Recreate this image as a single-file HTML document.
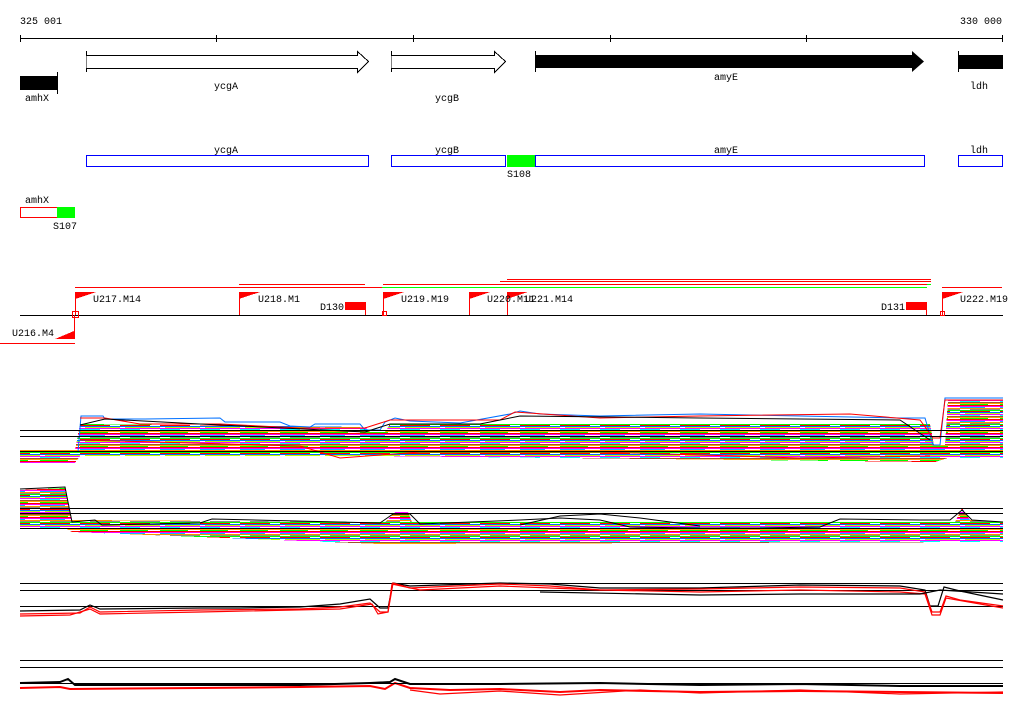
<!DOCTYPE html>
<html><head><meta charset="utf-8"><style>
html,body{margin:0;padding:0;background:#fff;width:1024px;height:714px;overflow:hidden}
svg{display:block}
text{font-family:"Liberation Mono",monospace;font-size:10px;fill:#000}
</style></head><body>
<svg width="1024" height="714" viewBox="0 0 1024 714" xmlns="http://www.w3.org/2000/svg" shape-rendering="crispEdges">
<defs>
<pattern id="st" width="40" height="14" patternUnits="userSpaceOnUse">
<rect width="40" height="14" fill="#fff"/>
<rect y="0" width="40" height="1" fill="#ff00ff"/>
<rect y="1" width="25" height="1" fill="#00c0ff"/>
<rect y="2" width="40" height="1" fill="#ff8c00"/>
<rect x="10" y="3" width="30" height="1" fill="#888"/>
<rect y="4" width="40" height="1" fill="#00ff00"/>
<rect y="5" width="30" height="1" fill="#ff0000"/>
<rect y="6" width="40" height="1" fill="#0070ff"/>
<rect x="5" y="7" width="35" height="1" fill="#c0ff00"/>
<rect y="8" width="40" height="1" fill="#ff00ff"/>
<rect y="9" width="20" height="1" fill="#00ffff"/>
<rect y="10" width="40" height="1" fill="#a0522d"/>
<rect y="11" width="40" height="1" fill="#ffa500"/>
<rect y="12" width="28" height="1" fill="#00ff00"/>
<rect y="13" width="40" height="1" fill="#ff0000"/>
</pattern>
</defs>
<!-- axis -->
<text x="20" y="24">325 001</text>
<text x="960" y="24">330 000</text>
<g stroke="#000" stroke-width="1" fill="none">
<line x1="20" y1="38.5" x2="1003" y2="38.5"/>
<line x1="20.5" y1="35" x2="20.5" y2="42"/><line x1="216.5" y1="35" x2="216.5" y2="42"/>
<line x1="413.5" y1="35" x2="413.5" y2="42"/><line x1="610.5" y1="35" x2="610.5" y2="42"/>
<line x1="806.5" y1="35" x2="806.5" y2="42"/><line x1="1002.5" y1="35" x2="1002.5" y2="42"/>
<!-- ycgA -->
<line x1="86.5" y1="51" x2="86.5" y2="72"/>
<path d="M86.5 55.5 H357.5 V51.5 L368.5 61.5 L357.5 72.5 V68.5 H86.5" fill="#fff"/>
<line x1="391.5" y1="51" x2="391.5" y2="72"/>
<path d="M391.5 55.5 H494.5 V51.5 L505.5 61.5 L494.5 72.5 V68.5 H391.5" fill="#fff"/>
<line x1="535.5" y1="51" x2="535.5" y2="72"/>
<line x1="958.5" y1="51" x2="958.5" y2="72"/>
<line x1="57.5" y1="72" x2="57.5" y2="94"/>
</g>
<path d="M535 55 H912 V51 L924 61.5 L912 72 V68 H535Z" fill="#000" shape-rendering="auto"/>
<rect x="958" y="55" width="45" height="14" fill="#000"/>
<rect x="20" y="76" width="37" height="14" fill="#000"/>
<text x="214" y="89">ycgA</text>
<text x="435" y="101">ycgB</text>
<text x="714" y="80">amyE</text>
<text x="970" y="89">ldh</text>
<text x="25" y="101">amhX</text>
<!-- blue boxes -->
<g fill="#fff" stroke="#0000ff">
<rect x="86.5" y="155.5" width="282" height="11"/>
<rect x="391.5" y="155.5" width="114" height="11"/>
<rect x="535.5" y="155.5" width="389" height="11"/>
<rect x="958.5" y="155.5" width="44" height="11"/>
</g>
<rect x="507" y="155" width="28" height="12" fill="#00ff00"/>
<text x="214" y="153">ycgA</text><text x="435" y="153">ycgB</text>
<text x="714" y="153">amyE</text><text x="970" y="153">ldh</text>
<text x="507" y="177">S108</text>
<rect x="20.5" y="207.5" width="37" height="10" fill="#fff" stroke="#ff0000"/>
<rect x="57" y="207" width="18" height="11" fill="#00ff00"/>
<text x="25" y="203">amhX</text><text x="53" y="229">S107</text>
<!-- track lines -->
<g stroke-width="1" fill="none">
<line x1="75" y1="287.5" x2="382" y2="287.5" stroke="#f00"/>
<line x1="382" y1="287.5" x2="927" y2="287.5" stroke="#0f0"/>
<line x1="239" y1="284.5" x2="365" y2="284.5" stroke="#f00"/>
<line x1="383" y1="284.5" x2="927" y2="284.5" stroke="#f00"/>
<line x1="927" y1="284.5" x2="931" y2="284.5" stroke="#0f0"/>
<line x1="500" y1="281.5" x2="931" y2="281.5" stroke="#f00"/>
<line x1="507" y1="279.5" x2="931" y2="279.5" stroke="#f00"/>
<line x1="942" y1="287.5" x2="1002" y2="287.5" stroke="#f00"/>
<line x1="20" y1="315.5" x2="1003" y2="315.5" stroke="#000"/>
<line x1="0" y1="343.5" x2="75" y2="343.5" stroke="#f00"/>
<g stroke="#f00">
<line x1="75.5" y1="292" x2="75.5" y2="315"/>
<line x1="74.5" y1="315" x2="74.5" y2="339"/>
<line x1="239.5" y1="292" x2="239.5" y2="315"/>
<line x1="383.5" y1="292" x2="383.5" y2="315"/>
<line x1="469.5" y1="292" x2="469.5" y2="315"/>
<line x1="507.5" y1="292" x2="507.5" y2="315"/>
<line x1="942.5" y1="292" x2="942.5" y2="315"/>
<line x1="365.5" y1="302" x2="365.5" y2="315"/>
<line x1="926.5" y1="302" x2="926.5" y2="315"/>
<rect x="72.5" y="311.5" width="6" height="6"/>
<rect x="382.5" y="311.5" width="4" height="4"/>
<rect x="940.5" y="311.5" width="4" height="4"/>
</g>
</g>
<g fill="#f00">
<path d="M75 292H96L75 299Z"/><path d="M239 292H260L239 299Z"/>
<path d="M383 292H404L383 299Z"/><path d="M469 292H490L469 299Z"/>
<path d="M507 292H528L507 299Z"/><path d="M942 292H963L942 299Z"/>
<path d="M74 331V339H55Z"/>
<rect x="345" y="302" width="20" height="8"/><rect x="906" y="302" width="20" height="8"/>
</g>
<text x="93" y="302">U217.M14</text>
<text x="258" y="302">U218.M1</text>
<text x="320" y="310">D130</text>
<text x="401" y="302">U219.M19</text>
<text x="487" y="302">U220.M11</text>
<text x="525" y="302">U221.M14</text>
<text x="881" y="310">D131</text>
<text x="960" y="302">U222.M19</text>
<text x="12" y="336">U216.M4</text>
<!-- panel 1 -->
<path d="M20 450H75L80 424L365 427L370 432L385 432L390 424L930 424L934 445L945 445L948 400L1003 400L1003 458L948 458L935 462L370 456L80 456L75 463L20 463Z" fill="url(#st)"/>
<g fill="none" stroke-width="1" shape-rendering="auto">
<path d="M78 452L81 416L103 416L105 419L145 419L220 418L225 422L280 422L290 426L310 427L315 424L360 424L365 430L380 430L385 422L395 418L410 421L460 423L510 414L520 411L540 414L600 416L700 414L800 416L900 418L925 418L933 445L940 445L945 398L1003 398" stroke="#0070ff"/>
<path d="M80 418L105 418L140 424L220 424L300 428L365 428L390 420L500 420L515 412L600 418L700 416L850 414L920 420L933 438L940 438L945 400L1003 400" stroke="#f00"/>
<path d="M80 425L105 419L200 424L365 432L390 424L480 424L520 416L700 418L900 420L930 440" stroke="#000"/>
<path d="M80 440L300 446L340 458L420 452L600 452L800 458L930 456" stroke="#f00"/>
</g>
<g stroke="#000" fill="none">
<line x1="20" y1="430.5" x2="1003" y2="430.5"/>
<line x1="20" y1="436.5" x2="1003" y2="436.5"/>
<line x1="20" y1="451.5" x2="1003" y2="451.5"/>
</g>
<!-- panel 2 -->
<path d="M20 490L65 488L72 520L385 522L395 512L408 512L412 522L955 522L962 508L970 520L1003 522L1003 542L380 544L72 532L65 528L20 528Z" fill="url(#st)"/>
<g fill="none" stroke="#000" shape-rendering="auto">
<path d="M20 489L65 487L72 522L95 520L102 525L200 523L212 519L380 523L393 514L410 514L420 524L520 520L560 518L600 520L630 527L700 528L760 528L820 527L840 519L920 520L950 520L962 510L972 520L1003 522"/>
<path d="M520 525L560 516L600 514L640 518L700 526"/>
</g>
<g stroke="#000" fill="none">
<line x1="20" y1="508.5" x2="1003" y2="508.5"/>
<line x1="20" y1="513.5" x2="1003" y2="513.5"/>
<line x1="20" y1="528.5" x2="1003" y2="528.5"/>
</g>
<!-- panel 3 -->
<g stroke="#000" fill="none">
<line x1="20" y1="583.5" x2="1003" y2="583.5"/>
<line x1="20" y1="590.5" x2="1003" y2="590.5"/>
<line x1="20" y1="606.5" x2="1003" y2="606.5"/>
<line x1="20" y1="660.5" x2="1003" y2="660.5"/>
<line x1="20" y1="667.5" x2="1003" y2="667.5"/>
</g>
<g fill="none" shape-rendering="auto" stroke-width="1.2">
<path d="M20 611L80 610L90 605L100 609L200 608L240 608L300 607L340 604L370 599L380 608L388 608L393 583L410 586L500 583L550 584L600 588L700 588L800 585L900 586L925 590L930 606L938 606L944 587L960 591L1003 600" stroke="#000"/>
<path d="M20 614L80 613L90 607L100 612L200 610L300 609L340 607L370 603L380 612L388 612L393 583L410 588L500 584L550 586L600 590L700 589L800 587L900 588L925 592L932 612L940 612L946 596L960 600L1003 606" stroke="#f00"/>
<path d="M20 616L70 615L90 609L100 614L200 612L340 609L372 604L378 614L388 612L392 584L420 590L500 586L600 590L700 592L800 590L900 592L925 594L932 615L940 615L946 598L1003 608" stroke="#f00"/>
<path d="M540 592L700 595L800 594L920 594L940 590L1003 594" stroke="#000"/>
<!-- panel 4 -->
<path d="M20 683L60 682L68 679L75 685L200 685L300 685L370 683L390 682L395 679L410 684L500 684L600 683L700 685L800 684L900 686L1003 686" stroke="#000" stroke-width="2"/>
<path d="M20 688L60 687L70 689L200 688L300 687L370 686L385 689L395 683L410 688L450 690L500 689L560 692L600 690L700 692L800 691L900 692L1003 693" stroke="#f00" stroke-width="2"/>
<path d="M410 690L440 694L500 691L560 695L640 690L700 693L800 690L900 694L1003 692" stroke="#f00"/>
</g>
<line x1="20" y1="683.5" x2="1003" y2="683.5" stroke="#000"/>
</svg>
</body></html>
